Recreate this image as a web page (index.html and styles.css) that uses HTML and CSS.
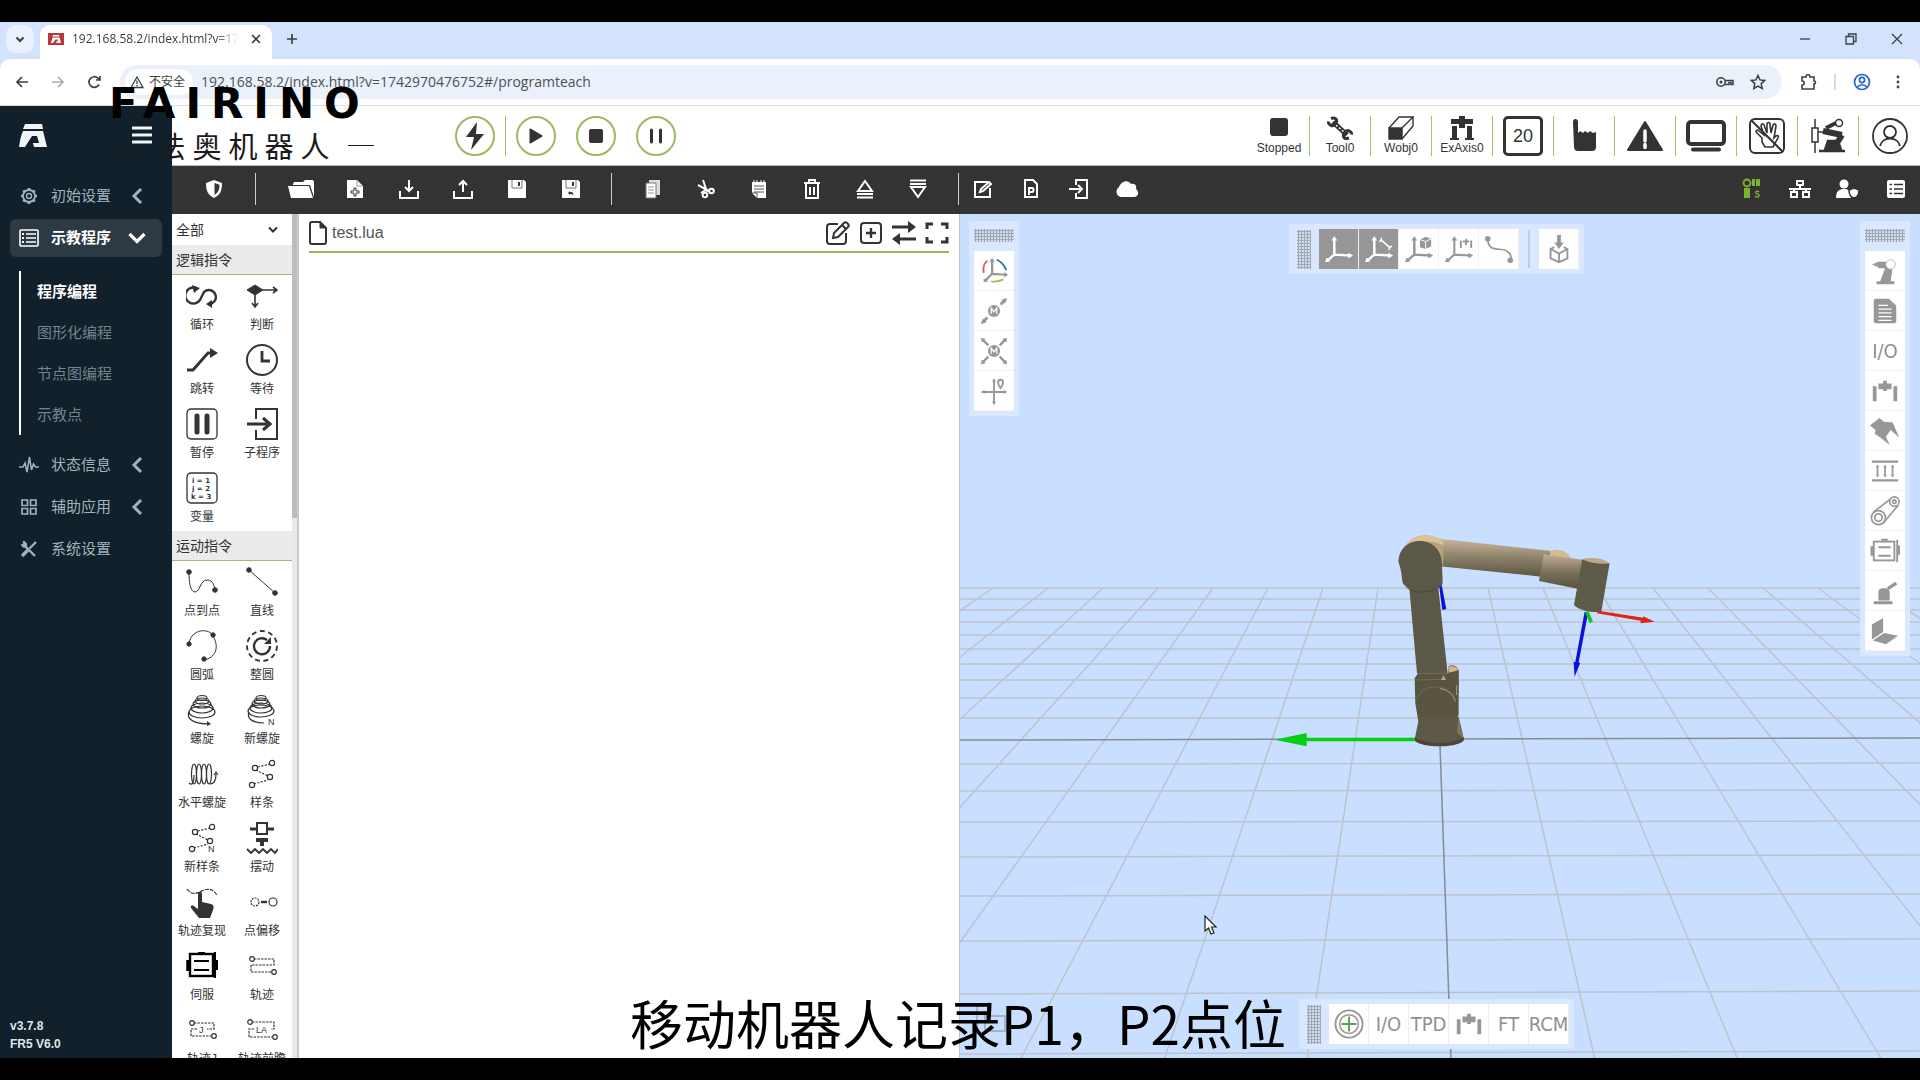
FILE: index.html
```html
<!DOCTYPE html>
<html lang="zh-CN">
<head>
<meta charset="utf-8">
<title>192.168.58.2/index.html</title>
<link rel="stylesheet" href="styles.css">
</head>
<body>
<div class="screen">
  <header class="browser">
    <div class="tabstrip">
      <button class="tab-search" aria-label="搜索标签页"><svg width="12" height="12" viewBox="0 0 12 12" class="ln"><path d="M2.500 4.500L6 8l3.500-3.500" stroke-width="2"/></svg></button>
      <div class="tab">
        <svg class="favicon" width="16" height="12" viewBox="0 0 16 12"><path fill="#b8373a" d="M0 0h16v12H0z"/><path fill="#fff" d="M5 2h6l.5 1.500h-7zM4.500 4.500h7L13 10H8.500l-.5-1.500h2L9.500 6.500H7.500L5 10H3z"/></svg>
        <span class="tab-title">192.168.58.2/index.html?v=17</span>
        <button class="plain" aria-label="关闭标签页"><svg width="12" height="12" viewBox="0 0 12 12" class="ln"><path d="M2 2l8 8M10 2l-8 8" stroke-width="1.700"/></svg></button>
      </div>
      <button class="plain newtab" aria-label="新标签页"><svg width="12" height="12" viewBox="0 0 12 12" class="ln"><path d="M6 1v10M1 6h10" stroke-width="1.700"/></svg></button>
      <div class="window-controls">
        <button class="plain" aria-label="最小化"><svg width="12" height="12" viewBox="0 0 12 12" class="ln"><path d="M1 6h10" stroke-width="1.300"/></svg></button>
        <button class="plain" aria-label="还原"><svg width="12" height="12" viewBox="0 0 12 12" class="ln"><path d="M1 3.500h7.500V11H1zM3.500 3.500V1H11v7.500H8.500" stroke-width="1.300"/></svg></button>
        <button class="plain" aria-label="关闭"><svg width="12" height="12" viewBox="0 0 12 12" class="ln"><path d="M1 1l10 10M11 1L1 11" stroke-width="1.300"/></svg></button>
      </div>
    </div>
    <div class="navbar">
      <button class="plain nav" aria-label="后退"><svg width="14" height="14" viewBox="0 0 14 14" class="ln"><path d="M13 7H2M7 2L2 7l5 5" stroke-width="1.700"/></svg></button>
      <button class="plain nav dim" aria-label="前进"><svg width="14" height="14" viewBox="0 0 14 14" class="ln"><path d="M1 7h11M7 2l5 5-5 5" stroke-width="1.700"/></svg></button>
      <button class="plain nav" aria-label="重新加载"><svg width="14" height="14" viewBox="0 0 14 14" class="ln"><path d="M12 9.500A5.300 5.300 0 1 1 11 3.200L13 5M13 1v4H9" stroke-width="1.700"/></svg></button>
      <form class="omnibox">
        <span class="chip"><svg width="14" height="14" viewBox="0 0 14 14" class="ln"><path d="M7 2l6 10.500H1zM7 5.500V9M7 10v1.300" stroke-width="1.300"/></svg>不安全</span>
        <input class="url" aria-label="地址" value="192.168.58.2/index.html?v=1742970476752#/programteach">
        <svg width="18" height="14" viewBox="0 0 18 14" class="ln"><circle cx="5" cy="7" r="4.200" stroke-width="1.500"/><circle cx="5" cy="7" r="1.500" fill="currentColor" stroke="none"/><path d="M9 5.500h8v4h-2v-2h-2v2H9" stroke-width="1.500"/></svg>
        <svg width="16" height="16" viewBox="0 0 16 16" class="ln"><path d="M8 1.500l2 4.400 4.700.5-3.500 3.200 1 4.800L8 12l-4.200 2.400 1-4.800L1.300 6.400 6 5.900z" stroke-width="1.500"/></svg>
      </form>
      <button class="plain ext" aria-label="扩展程序"><svg width="18" height="18" viewBox="0 0 18 18" class="ln"><path d="M3 4h4c0-3 4-3 4 0h4v4c2 0 2 3 0 3v5H3v-4c3 0 3-4 0-4z" stroke-width="1.600"/></svg></button>
      <span class="nav-sep"></span>
      <button class="plain profile" aria-label="个人资料"><svg width="18" height="18" viewBox="0 0 18 18" class="ln"><circle cx="9" cy="9" r="7.500" stroke-width="1.700"/><circle cx="9" cy="7" r="2.600" stroke-width="1.700"/><path d="M4.500 14c2-3 7-3 9 0" stroke-width="1.700"/></svg></button>
      <button class="plain more" aria-label="菜单"><svg width="4" height="16" viewBox="0 0 4 16" fill="currentColor"><circle cx="2" cy="3" r="1.400"/><circle cx="2" cy="8" r="1.400"/><circle cx="2" cy="13" r="1.400"/></svg></button>
    </div>
  </header>

  <div class="app">
    <nav class="sidebar">
      <div class="brand">
        <svg width="28" height="23" viewBox="0 0 28 23" fill="#f2f5f6"><path d="M6 0h17l1 5H4zM4 7h20l4 16H15l-1-4h6l-2-7h-5L6 23H0c1-7 2-12 4-16z"/></svg>
        <button class="plain burger" aria-label="折叠菜单"><svg width="20" height="18" viewBox="0 0 20 18"><path d="M1 2h18M1 9h18M1 16h18" stroke="#f2f5f6" stroke-width="3" stroke-linecap="round"/></svg></button>
      </div>
      <a class="item" href="#"><svg width="18" height="18" viewBox="0 0 18 18" class="ln"><circle cx="9" cy="9" r="6" stroke-width="1.800"/><circle cx="9" cy="9" r="2.500" stroke-width="1.500"/><path d="M9 1v2M9 15v2M1 9h2M15 9h2M3.300 3.300l1.500 1.500M13.200 13.200l1.500 1.500M14.700 3.300l-1.500 1.500M4.800 13.200l-1.500 1.500" stroke-width="2.600"/></svg><span>初始设置</span><svg class="chev" width="12" height="18" viewBox="0 0 12 18"><path d="M10 2L3 9l7 7" fill="none" stroke="currentColor" stroke-width="3"/></svg></a>
      <a class="item active" href="#"><svg width="20" height="18" viewBox="0 0 20 18" class="ln"><rect x="1" y="1" width="18" height="16" rx="1" stroke-width="1.600"/><path d="M7 5h10M7 9h10M7 13h10" stroke-width="1.400"/><path d="M3 5h2M3 9h2M3 13h2" stroke-width="1.800"/></svg><span>示教程序</span><svg class="chev" width="18" height="12" viewBox="0 0 18 12"><path d="M1.500 2L9 9.500 16.500 2" fill="none" stroke="currentColor" stroke-width="3.200"/></svg></a>
      <div class="sub">
        <a class="current" href="#">程序编程</a>
        <a href="#">图形化编程</a>
        <a href="#">节点图编程</a>
        <a href="#">示教点</a>
      </div>
      <a class="item" href="#"><svg width="20" height="18" viewBox="0 0 20 18" class="ln"><path d="M0 11h4l2-4 2 9L10.500 1l2 13 2-6 2 3H20" stroke-width="1.600"/></svg><span>状态信息</span><svg class="chev" width="12" height="18" viewBox="0 0 12 18"><path d="M10 2L3 9l7 7" fill="none" stroke="currentColor" stroke-width="3"/></svg></a>
      <a class="item" href="#"><svg width="18" height="18" viewBox="0 0 18 18" class="ln"><path d="M2 2h5.500v5.500H2zM10.500 2H16v5.500h-5.500zM2 10.500h5.500V16H2zM10.500 10.500H16V16h-5.500z" stroke-width="1.700"/></svg><span>辅助应用</span><svg class="chev" width="12" height="18" viewBox="0 0 12 18"><path d="M10 2L3 9l7 7" fill="none" stroke="currentColor" stroke-width="3"/></svg></a>
      <a class="item" href="#"><svg width="18" height="18" viewBox="0 0 18 18" class="ln"><path d="M3 4l12 12M16 2L9.500 8.500" stroke-width="2.400"/><path d="M8 10l-6 6" stroke-width="3.400"/><path d="M1.500 4.500c0 3 4 4 5 1.500S5 1 3 1.500L4 4z" fill="currentColor" stroke-width="1"/></svg><span>系统设置</span></a>
      <p class="version">v3.7.8<br>FR5 V6.0</p>
    </nav>

    <div class="main">
      <div class="control-bar">
        <div class="runs">
          <button class="round" aria-label="使能"><svg width="24" height="28" viewBox="0 0 24 28"><path fill="#333" d="M14 0L3 15h8L8 28l13-16h-8z"/></svg></button>
          <span class="rule"></span>
          <button class="round" aria-label="运行"><svg width="14" height="16" viewBox="0 0 14 16"><path fill="#333" d="M1.500 1.500v13l11-6.500z" stroke="#333" stroke-width="2" stroke-linejoin="round"/></svg></button>
          <button class="round" aria-label="停止"><svg width="14" height="14" viewBox="0 0 14 14"><rect width="14" height="14" rx="2" fill="#333"/></svg></button>
          <button class="round" aria-label="暂停"><svg width="14" height="16" viewBox="0 0 14 16"><path d="M2.500 2v12M11.500 2v12" stroke="#333" stroke-width="3" stroke-linecap="round"/></svg></button>
        </div>
        <div class="states">
          <button class="state"><svg width="24" height="24" viewBox="0 0 24 24"><rect x="3" y="2" width="18" height="18" rx="3" fill="#333"/></svg>Stopped</button>
          <button class="state"><svg width="26" height="24" viewBox="0 0 26 24"><path d="M6 6l14 13" stroke="#333" stroke-width="5"/><path d="M9 9l8 7" stroke="#fff" stroke-width="1.500" stroke-dasharray="2 2"/><path d="M4 2.500c5-2 7 2 4.500 5.500S1 9 1.500 5.500M22 22c-5 2-7-2-4.500-5.500S25 15 24.500 18.500" fill="none" stroke="#333" stroke-width="3"/></svg>Tool0</button>
          <button class="state"><svg width="26" height="24" viewBox="0 0 26 24" stroke="#333" stroke-width="1.400"><path d="M1 12h13v11H1z" fill="#333"/><path d="M1 12L11 1h14L14 12M25 1v9L14 23" fill="none"/></svg>Wobj0</button>
          <button class="state"><svg width="26" height="24" viewBox="0 0 26 24"><path d="M2 3h22v5H2zM10 0h6v12h-6zM3 10h5v13H3zM18 10h5v13h-5zM1 22h9v2H1zM16 22h9v2h-9z" fill="#333"/></svg>ExAxis0</button>
          <button class="state"><span class="speed">20</span></button>
          <button class="state"><svg width="24" height="36" viewBox="0 0 24 36"><path d="M3 1c2 0 3 1 3 3v11l2-2 3 2 2-2 3 2 2-2 3 2 3-1v15c0 3-2 4-4 4H6c-2 0-4-1-4-4L1 4c0-2 1-3 2-3z" fill="#333"/></svg></button>
          <button class="state"><svg width="38" height="32" viewBox="0 0 38 32"><path d="M19 2l17 28H2z" fill="#333" stroke="#333" stroke-width="2" stroke-linejoin="round"/><path d="M19 11v10M19 24.500v3" stroke="#fff" stroke-width="3.500" stroke-linecap="round"/></svg></button>
          <button class="state"><svg width="40" height="32" viewBox="0 0 40 32"><rect x="2" y="2" width="36" height="22" rx="3" fill="none" stroke="#333" stroke-width="4"/><path d="M7 29.500h26" stroke="#333" stroke-width="4" stroke-linecap="round"/></svg></button>
          <button class="state"><svg width="36" height="36" viewBox="0 0 36 36" fill="none" stroke="#333"><rect x="1" y="1" width="34" height="34" rx="5" stroke-width="2"/><path d="M13 20L8 15c-2-2 0-4 2-2l5 4-3-9c0-2 2-3 3-1l3 8V6c0-2 3-2 3 0l1 9 2-8c1-2 3-1 3 1l-2 12 2-2c2-1 3 0 2 2l-5 9H16l-3-5z" stroke-width="1.600"/><path d="M2 2l32 32" stroke-width="2"/></svg></button>
          <button class="state"><svg width="36" height="36" viewBox="0 0 36 36" fill="none" stroke="#333"><path d="M9 33h26M15 32l3-9h10l3 9z" fill="#333" stroke-width="2.500"/><path d="M27 25l5-8M32 17L13 13" stroke-width="6"/><path d="M16 10l10-5" stroke-width="4"/><circle cx="29" cy="5" r="3.500" stroke-width="1.500"/><rect x="2" y="10" width="6" height="14" stroke-width="1.500"/><path d="M5 1v9M5 24v11M8 14h7" stroke-width="1.500"/></svg></button>
          <button class="state"><svg width="36" height="36" viewBox="0 0 36 36" fill="none" stroke="#333" stroke-width="1.800"><circle cx="18" cy="18" r="17"/><circle cx="18" cy="14" r="6"/><path d="M8 28c2-10 18-10 20 0"/></svg></button>
        </div>
      </div>

      <div class="toolbar">
        <div class="group g1"><button aria-label="安全"><svg width="20" height="20" viewBox="0 0 20 20"><path d="M10 1l8 3c0 8-2 12-8 15C4 16 2 12 2 4z" fill="#fff"/><path d="M10.500 4l5 1.700c0 5-1.500 8-5 10z" fill="#333"/></svg></button></div>
        <div class="group g2">
          <button aria-label="打开"><svg width="26" height="20" viewBox="0 0 26 20" fill="#fff"><path d="M5 5l1-2h9l2-2h8l1 2v15L22 6H5zM0 7h21l4 12H3z"/></svg></button>
          <button aria-label="新建"><svg width="18" height="20" viewBox="0 0 18 20"><path d="M1 1h10l6 6v12H1z" fill="#fff"/><path d="M11 1v6h6" stroke="#999" fill="none"/><path d="M8 9h2v3h3v2h-3v3H8v-3H5v-2h3z" stroke="#333" fill="none"/></svg></button>
          <button aria-label="导入"><svg width="20" height="20" viewBox="0 0 20 20" class="lw"><path d="M1 12v7h18v-7M10 1v10M6 8l4 4 4-4"/></svg></button>
          <button aria-label="导出"><svg width="20" height="20" viewBox="0 0 20 20" class="lw"><path d="M1 12v7h18v-7M10 13V3M6 6l4-4 4 4"/></svg></button>
          <button aria-label="保存"><svg width="20" height="20" viewBox="0 0 20 20"><path d="M1 1h16l2 2v16H1z" fill="#fff"/><path d="M5 1v8h10V1" fill="none" stroke="#777"/><path d="M12 3v4" stroke="#333" stroke-width="2"/></svg></button>
          <button aria-label="另存为"><svg width="20" height="20" viewBox="0 0 20 20"><path d="M1 1h16l2 2v16H1z" fill="#fff"/><path d="M5 1v8h10V1" fill="none" stroke="#777"/><path d="M12 3v4" stroke="#333" stroke-width="2"/><path d="M12 17c0-2-1-2-3-2v1l-2-2 2-2v1c3 0 4 1 3 4" fill="#333"/></svg></button>
        </div>
        <div class="group g3">
          <button aria-label="复制"><svg width="16" height="20" viewBox="0 0 16 20"><path d="M4 1h11v15H4z" fill="#ddd"/><path d="M1 4h10v15H1z" fill="#fff" stroke="#777"/><path d="M3 8h6M3 11h6M3 14h6" stroke="#999"/></svg></button>
          <button aria-label="剪切"><svg width="20" height="20" viewBox="0 0 20 20" class="lw"><path d="M7 1l4 12M2 6l11 6M11 10l-6 4"/><circle cx="15.500" cy="12" r="2.300"/><circle cx="9" cy="16" r="2.300"/></svg></button>
          <button aria-label="粘贴"><svg width="16" height="20" viewBox="0 0 16 20"><path d="M1 3h14v16H6l-5-5z" fill="#fff"/><path d="M3 1v3M6 1v3M10 1v3M13 1v3" stroke="#fff"/><path d="M3 7h10M3 10h10M3 13h10M1 14h5v5" fill="none" stroke="#555"/></svg></button>
          <button aria-label="删除"><svg width="18" height="20" viewBox="0 0 18 20" class="lw"><path d="M1 4h16M6 3V1h6v2M3 5v14h12V5M7 8v8M11 8v8"/></svg></button>
          <button aria-label="上移"><svg width="18" height="20" viewBox="0 0 18 20" class="lw"><path d="M9 2l7 10H2zM1 15h16M1 18.500h16"/></svg></button>
          <button aria-label="下移"><svg width="18" height="20" viewBox="0 0 18 20" class="lw"><path d="M9 18l7-10H2zM1 5h16M1 1.500h16"/></svg></button>
        </div>
        <div class="group g4">
          <button aria-label="编辑"><svg width="18" height="18" viewBox="0 0 18 18" class="lw"><path d="M16 8v9H1V2h13M6 12l1-3 8-7 2 2-8 7z"/></svg></button>
          <button aria-label="程序"><svg width="16" height="20" viewBox="0 0 16 20" class="lw"><path d="M2 1h8l4 4v13H2zM6 16V9h3c2 0 2 4 0 4H6"/></svg></button>
          <button aria-label="导入文件"><svg width="20" height="20" viewBox="0 0 20 20" class="lw"><path d="M7 6V1h11v18H7v-5M0 10h12M9 6l4 4-4 4"/></svg></button>
          <button aria-label="云"><svg width="24" height="18" viewBox="0 0 24 18" fill="#fff"><path d="M6 17a5.500 5.500 0 0 1-2-10C6 1 13-1 16 4c4-1 6 2 5 5 4 3 2 8-2 8z"/></svg></button>
        </div>
        <div class="group g5">
          <button aria-label="状态"><svg width="20" height="22" viewBox="0 0 20 22"><circle cx="5" cy="5" r="3.500" fill="none" stroke="#7cb42f" stroke-width="1.800"/><path d="M10 1h3v7h-3zM14 1h4v7h-4zM2 10h6v10H2z" fill="#7cb42f"/><path d="M17 14c-1-1-4-1-3 1s4 1 3 3-3 1-4 0" fill="none" stroke="#7cb42f" stroke-width="1.400"/></svg></button>
          <button aria-label="网络"><svg width="22" height="20" viewBox="0 0 22 20" class="lw"><path d="M8 2h6v4H8zM2 13h6v5H2zM14 13h6v5h-6zM11 6v4M0 10h22M5 10v3M17 10v3"/></svg></button>
          <button aria-label="用户"><svg width="24" height="20" viewBox="0 0 24 20"><circle cx="8" cy="5" r="4.500" fill="#fff"/><path d="M0 19c0-7 3-9 8-9s7 2 7 9z" fill="#fff"/><path d="M18 9l5 2c0 4-1 7-5 8-4-1-5-4-5-8z" fill="#fff" stroke="#333" stroke-width="1.500"/></svg></button>
          <button aria-label="列表"><svg width="18" height="18" viewBox="0 0 18 18"><rect width="18" height="18" rx="2" fill="#fff"/><path d="M7 4.500h9M7 9h9M7 13.500h9M2.500 4.500H5M2.500 9H5M2.500 13.500H5" stroke="#333" stroke-width="1.700"/></svg></button>
        </div>
      </div>

      <div class="workspace">
        <section class="palette">
          <div class="palette-body">
            <label class="filter"><select aria-label="指令分类"><option>全部</option></select><svg width="10" height="8" viewBox="0 0 10 8"><path d="M1 1.500l4 4 4-4" fill="none" stroke="#333" stroke-width="2"/></svg></label>
            <h2>逻辑指令</h2>
            <div class="cmds">
              <button><svg viewBox="0 0 32 32" class="ic"><path d="M10 8a8 8 0 1 0 4 12L18 12a7 7 0 1 1 4 12" stroke-width="2.400"/><path d="M6 5l8 3-6 5zM26 28l-6-4 6-4z" fill="#333" stroke="none"/></svg>循环</button>
              <button><svg viewBox="0 0 32 32" class="ic"><path d="M1 10l8-5 8 5-8 5z" fill="#333"/><path d="M17 10h13M27 7l4 3-4 3M9 15v11M6 23l3 4 3-4" stroke-width="1.600"/></svg>判断</button>
              <button><svg viewBox="0 0 32 32" class="ic"><path d="M1 26h6L22 9h4" stroke-width="2.800"/><path d="M24 4l8 5-8 5z" fill="#333" stroke="none"/></svg>跳转</button>
              <button><svg viewBox="0 0 32 32" class="ic"><circle cx="16" cy="16" r="15" stroke-width="2"/><path d="M16 7v10h8" stroke-width="2.800"/></svg>等待</button>
              <button><svg viewBox="0 0 32 32" class="ic"><rect x="1" y="1" width="30" height="30" rx="4" stroke-width="1.300"/><path d="M11 8v16M21 8v16" stroke-width="5" stroke-linecap="round"/></svg>暂停</button>
              <button><svg viewBox="0 0 32 32" class="ic"><path d="M10 11V1h21v30H10V22" stroke-width="2"/><path d="M1 16h20M17 10l7 6-7 6" stroke-width="3"/></svg>子程序</button>
              <button><svg viewBox="0 0 32 32" class="ic"><rect x="1" y="1" width="30" height="30" rx="4" stroke-width="1.300"/><g class="mini"><text x="6" y="11">i = 1</text><text x="6" y="19">j = 2</text><text x="5" y="27">k = 3</text></g></svg>变量</button>
            </div>
            <h2>运动指令</h2>
            <div class="cmds">
              <button><svg viewBox="0 0 32 32" class="ic"><path d="M3 7c0 8 1 19 6 19S14 14 21 14s6 6 9 10" stroke-width="1"/><circle cx="3" cy="6" r="2.300" fill="#333"/><circle cx="29" cy="24" r="2.300" fill="#333"/></svg>点到点</button>
              <button><svg viewBox="0 0 32 32" class="ic"><path d="M3 4l26 23" stroke-width="1"/><circle cx="3" cy="4" r="2.300" fill="#333"/><circle cx="29" cy="27" r="2.300" fill="#333"/></svg>直线</button>
              <button><svg viewBox="0 0 32 32" class="ic"><path d="M3 14C5-2 24-2 27 6c7 12 2 22-9 24" stroke-width="1"/><circle cx="3" cy="14" r="2.200" fill="#333"/><circle cx="27" cy="5" r="2.200" fill="#333"/><circle cx="18" cy="29" r="2.200" fill="#333"/></svg>圆弧</button>
              <button><svg viewBox="0 0 32 32" class="ic"><circle cx="16" cy="16" r="15" stroke-width="1.800" stroke-dasharray="5 3.500"/><path d="M24 16a8 8 0 1 1-3-6" stroke-width="2.400"/><path d="M25 7v7h-7z" fill="#333" stroke="none"/></svg>整圆</button>
              <button><svg viewBox="0 0 32 32" class="ic"><g stroke-width="1.200"><ellipse cx="16" cy="4" rx="5" ry="2.500"/><ellipse cx="16" cy="7" rx="7" ry="3"/><ellipse cx="16" cy="10" rx="9" ry="4"/><ellipse cx="16" cy="14" rx="11" ry="5"/><ellipse cx="16" cy="18" rx="13" ry="6"/><path d="M3 18c-3 7 5 12 20 12"/></g><path d="M21 27l4 3-4 2z" fill="#333" stroke="none"/></svg>螺旋</button>
              <button><svg viewBox="0 0 32 32" class="ic"><g stroke-width="1.200"><ellipse cx="15" cy="4" rx="5" ry="2.500"/><ellipse cx="15" cy="7" rx="7" ry="3"/><ellipse cx="15" cy="10" rx="9" ry="4"/><ellipse cx="15" cy="14" rx="11" ry="5"/><ellipse cx="15" cy="17" rx="13" ry="6"/><path d="M3 18c-3 7 5 11 15 11"/></g><text class="tag" x="22" y="31">N</text></svg>新螺旋</button>
              <button><svg viewBox="0 0 32 32" class="ic"><g stroke-width="1.200"><path d="M3 25c3 3 5 0 5-8"/><ellipse cx="8" cy="16" rx="2.500" ry="10"/><ellipse cx="13" cy="16" rx="2.500" ry="10"/><ellipse cx="18" cy="16" rx="2.500" ry="10"/><ellipse cx="23" cy="16" rx="2.500" ry="10"/><path d="M24 26c5 0 6-5 6-10M28 17l2-3 2 3"/></g></svg>水平螺旋</button>
              <button><svg viewBox="0 0 32 32" class="ic"><g stroke-width="1.200"><path d="M8 26l14-4M10 12l12 6M12 9l12-3" stroke-dasharray="2 1.500"/><circle cx="6" cy="27" r="2.600"/><circle cx="24" cy="19" r="2.600"/><circle cx="9" cy="10" r="2.600"/><circle cx="26" cy="5" r="2.600"/></g></svg>样条</button>
              <button><svg viewBox="0 0 32 32" class="ic"><g stroke-width="1.200"><path d="M8 26l14-4M10 12l12 6M12 9l12-3" stroke-dasharray="2 1.500"/><circle cx="6" cy="27" r="2.600"/><circle cx="24" cy="19" r="2.600"/><circle cx="9" cy="10" r="2.600"/><circle cx="26" cy="5" r="2.600"/></g><text class="tag" x="22" y="30">N</text></svg>新样条</button>
              <button><svg viewBox="0 0 32 32" class="ic"><rect x="11" y="1" width="10" height="11" stroke-width="2"/><path d="M4 7h7M21 7h7" stroke-width="3"/><path d="M10 18h12M16 18v6" stroke-width="4"/><path d="M1 27l4 4 4-4 4 4 4-4 4 4 4-4 4 4 3-4" stroke-width="1.800"/></svg>摆动</button>
              <button><svg viewBox="0 0 32 32" class="ic"><path d="M1 3c6 8 12 3 17 1s11 0 13 6" stroke-width="1.200" stroke-dasharray="4 1"/><path d="M12 8c0-3 4-3 4 0v8l9 2c3 1 3 3 2 6l-3 8H13L5 22c-1-3 2-3 4-1l3 2z" fill="#333" stroke="none"/></svg>轨迹复现</button>
              <button><svg viewBox="0 0 32 32" class="ic"><g stroke-width="1.200"><circle cx="9" cy="16" r="4" stroke-dasharray="2 1"/><circle cx="27" cy="16" r="4"/></g><path d="M15 16h6" stroke-width="2.400"/></svg>点偏移</button>
              <button><svg viewBox="0 0 32 32" class="ic dark"><rect x="4" y="4" width="23" height="22" stroke-width="2.400"/><path d="M8 11h15M8 20h15M12 3h7M29 2v26" stroke-width="2"/><path d="M2 10v11M31 10v10" stroke-width="3.500"/></svg>伺服</button>
              <button><svg viewBox="0 0 32 32" class="ic"><g stroke-width="1.200"><path d="M8 9h20v6H5v7h20" stroke-dasharray="2.500 1"/><circle cx="6" cy="9" r="2.300"/><circle cx="28" cy="22" r="2.300"/></g></svg>轨迹</button>
              <button><svg viewBox="0 0 32 32" class="ic"><g stroke-width="1.200"><path d="M8 9h20v6h-7M11 15H5v7h20" stroke-dasharray="2.500 1"/><circle cx="6" cy="9" r="2.300"/><circle cx="28" cy="22" r="2.300"/></g><text class="tag" x="13" y="19">J</text></svg>轨迹J</button>
              <button><svg viewBox="0 0 32 32" class="ic"><g stroke-width="1.200"><path d="M6 8h22v7h-3M8 15H3v8h23" stroke-dasharray="2.500 1"/><circle cx="4" cy="8" r="2.300"/><circle cx="29" cy="23" r="2.300"/></g><text class="tag" x="10" y="19">LA</text></svg>轨迹前瞻</button>
            </div>
          </div>
          <div class="scroll"><div class="thumb"></div></div>
        </section>

        <section class="editor">
          <div class="file-bar">
            <svg width="18" height="24" viewBox="0 0 18 24" class="ln"><path d="M3 1h8l6 6v14c0 1-1 2-2 2H3c-1 0-2-1-2-2V3c0-1 1-2 2-2z" stroke-width="2"/><path d="M11 1v6h6z" fill="#333"/></svg>
            <span class="file-name">test.lua</span>
            <button class="plain" aria-label="编辑"><svg width="24" height="24" viewBox="0 0 24 24" class="ln"><path d="M12 3H4C2 3 1 4 1 6v14c0 2 1 3 3 3h13c2 0 3-1 3-3v-8M7 17l1-5L18 2c1-1 2-1 3 0l1 1c1 1 1 2 0 3L12 16zM16 4l4 4" stroke-width="2"/></svg></button>
            <button class="plain" aria-label="添加"><svg width="24" height="24" viewBox="0 0 24 24" class="ln"><rect x="2" y="2" width="20" height="20" rx="3" stroke-width="2"/><path d="M12 7v10M7 12h10" stroke-width="2.400"/></svg></button>
            <button class="plain" aria-label="切换"><svg width="24" height="24" viewBox="0 0 24 24" class="ln"><path d="M0 6h18M24 18H6" stroke-width="3"/><path d="M16 0l8 6-8 6zM8 12l-8 6 8 6z" fill="#333" stroke="none"/></svg></button>
            <button class="plain" aria-label="全屏"><svg width="24" height="24" viewBox="0 0 24 24" class="ln"><path d="M2 8V3h6M16 3h6v5M22 16v5h-6M8 21H2v-5" stroke-width="3"/></svg></button>
          </div>
        </section>

        <section class="scene">
          <svg class="world" viewBox="0 -1 960 845" preserveAspectRatio="xMidYMin slice">
            <path class="grid" d="M0 373H960M0 384H960M0 395H960M0 407H960M0 420H960M0 434H960M0 449H960M0 465H960M0 483H960M0 503H960M0 549L960 548M0 576L960 575M0 607L960 606M0 642L960 640M0 681L960 679M0 726L960 724M0 779L960 776M0 839L960 836
            M33 373L-659 845M88 373L-515 845M143 373L-371 845M198 373L-228 845M253 373L-84 845M308 373L60 845M363 373L204 845M418 373L347 845M528 373L635 845M583 373L778 845M638 373L922 845M693 373L1066 845M748 373L1210 845M803 373L1353 845M858 373L1497 845M913 373L1641 845"/>
            <path class="axis" d="M0 525L960 523M480 530L491 845"/>
            <defs>
              <linearGradient id="arm" x1=".05" y1="0" x2="0" y2="1"><stop offset="0" stop-color="#cdb79a"/><stop offset=".4" stop-color="#958871"/><stop offset="1" stop-color="#58523f"/></linearGradient>
              <linearGradient id="fore" x1="0" y1="0" x2="0" y2="1"><stop offset="0" stop-color="#c2ad92"/><stop offset=".5" stop-color="#7d725c"/><stop offset="1" stop-color="#58533f"/></linearGradient>
            </defs>
            <g transform="translate(280 285) scale(.3333)">
              <path d="M597 255l8 0 14 72-12 3z" fill="#0b12d8"/>
              <path d="M625 500c8-8 25-5 31 10v70h-30z" fill="#6f6752"/>
              <path d="M625 503c8-8 25-4 30 8-10 8-22 8-27 4z" fill="#d2b78d"/>
              <path d="M585 115l350 38-30 77-315-32z" fill="url(#arm)"/>
              <path d="M930 155c20-12 50-5 62 18l-50 5z" fill="#d6bb8f"/>
              <path d="M490 150c15-40 60-55 100-37 18 6 24 30 18 85l-20-20z" fill="#b7a27f"/>
              <path d="M490 150c15-40 60-55 100-37 14 5 20 12 20 22-40-15-80-20-120 15z" fill="#dcc196"/>
              <path d="M475 185c2-40 30-62 65-62 38 0 66 28 66 70l2 55c-1 8-5 12-13 16l28 256h-92l-23-255c-8-3-15-8-20-16-4-30-4-40-13-64z" fill="#5b5847"/>
              <path d="M524 535l10-15 90 0 32-10v135l-20 30-100-5-10-60z" fill="#58543f"/>
              <path d="M525 540l95-2M530 600c10-50 100-55 115 0" fill="none" stroke="#716a56" stroke-width="3"/>
              <path d="M600 566c25 5 38 15 46 38M650 555v30" fill="none" stroke="#a79b83" stroke-width="3"/>
              <path d="M610 525l8 15-14 0z" fill="#b5a68c"/>
              <path d="M538 650h118l16 68c-20 26-125 26-148 0z" fill="#5d5946"/>
              <path d="M655 655l16 62-20-20z" fill="#7e745e"/>
              <path d="M524 712c25 22 120 22 147 0v10c-20 22-125 22-147 0z" fill="#4b4738"/>
              <path d="M500 262c25 22 75 18 100-4" fill="none" stroke="#4a4637" stroke-width="3"/>
              <path d="M912 163l120 17-15 87-120-24z" fill="url(#fore)"/>
              <path d="M1027 178l82 12-25 145c-30 5-70-5-82-20l10-55z" fill="#5f5b49"/>
              <path d="M1027 178c20-8 65-5 82 12-20 4-60 0-82-12z" fill="#bda98a"/>
              <path d="M1075 332l135 21v-4l34 16-42 5v-8l-132-22z" fill="#e02418"/>
              <path d="M1034 335l10 5-28 148h5l-17 42-3-44h5z" fill="#0a10dd"/>
              <path d="M1036 338l9-6 14 32-10 6z" fill="#08c91c"/>
              <path d="M103 719l97-20v14h325v11H200v15z" fill="#04cf14"/>
            </g>
          </svg>

          <div class="dock dock-left">
            <span class="dots wide"></span>
            <div class="stack">
              <button aria-label="旋转"><svg viewBox="0 0 32 32" class="gr"><path d="M14 19V4M14 19l15 1M14 19l-7 7" stroke-width="2.400"/><path d="M11 6l3-4 3 4zM27 17l4 3-4 3zM5 24v4l5-1z" fill="#979797" stroke="none"/><path d="M5 18c-1-5 0-10 4-13" stroke="#df5f52" stroke-width="2"/><path d="M19 4c5 2 8 6 10 11" stroke="#2d6d9c" stroke-width="2"/><path d="M13 27c5 1 9 0 13-2" stroke="#9cc44c" stroke-width="2"/></svg></button>
              <button aria-label="单点"><svg viewBox="0 0 32 32" class="gr"><circle cx="16" cy="16" r="6.500" fill="#979797" stroke="none"/><path d="M5 27l4-4M23 9l4-4" stroke-width="3"/><path d="M2 30l2-6 4 4zM30 2l-2 6-4-4z" fill="#979797" stroke="none"/><path d="M13 19v-6l3 4 3-4v6" stroke="#fff" stroke-width="1.300"/></svg></button>
              <button aria-label="多点"><svg viewBox="0 0 32 32" class="gr"><circle cx="16" cy="16" r="6.500" fill="#979797" stroke="none"/><path d="M4 28l6-6M22 10l6-6M4 4l6 6M22 22l6 6" stroke-width="2.600"/><path d="M2 30l1-5 4 4zM30 2l-1 5-4-4zM2 2l5 1-4 4zM30 30l-5-1 4-4z" fill="#979797" stroke="none"/><path d="M13 19v-6l3 4 3-4v6" stroke="#fff" stroke-width="1.300"/></svg></button>
              <button aria-label="定位"><svg viewBox="0 0 32 32" class="gr"><path d="M3 17h26M16 4v26" stroke-width="2"/><path d="M2 17l4-2v4zM30 17l-4-2v4zM16 31l-2-4h4zM16 2l-2 4h4z" fill="#979797" stroke="none"/><path d="M23 13c-4-5-3-9 0-9s4 4 0 9z" stroke-width="2"/></svg></button>
            </div>
          </div>

          <div class="dock dock-right">
            <span class="dots wide"></span>
            <div class="stack">
              <button aria-label="机器人"><svg viewBox="0 0 32 32" class="gf"><path d="M2 9l7-3v6zM9 6h10v7H9zM16 13h8l-2 14h4v3H7v-3h4z"/><circle cx="22" cy="9" r="5" fill="#fff" stroke="#bbb"/></svg></button>
              <button aria-label="日志"><svg viewBox="0 0 32 32" class="gf"><path d="M4 5c0-1 1-2 2-2h14l8 7v17c0 1-1 2-2 2H6c-1 0-2-1-2-2z"/><path d="M9 10h10M9 14h14M9 18h14M9 22h14M9 26h14" stroke="#fff" stroke-width="1.500"/></svg></button>
              <button class="txt">I/O</button>
              <button aria-label="外部轴"><svg viewBox="0 0 32 32" class="gf"><path d="M3 11h4v16H3zM25 11h4v16h-4zM9 8h14v6H9zM14 5h4v11h-4z"/></svg></button>
              <button aria-label="夹爪"><svg viewBox="0 0 32 32" class="gf"><path d="M10 2l5 4 9 1 2 4 5 12-9-8-5 7 4 9-10-8-6-4 1-4-6-5z"/></svg></button>
              <button aria-label="负载"><svg viewBox="0 0 32 32" class="gr"><path d="M2 6h28M2 26h28" stroke-width="2.600"/><path d="M8 11v10M16 11v10M24 11v10" stroke-width="1.800"/><path d="M6 12l2-3 2 3zM14 12l2-3 2 3zM22 12l2-3 2 3zM6 20l2 3 2-3zM14 20l2 3 2-3zM22 20l2 3 2-3z" fill="#979797" stroke="none"/></svg></button>
              <button aria-label="传送带"><svg viewBox="0 0 32 32" class="gr" stroke-width="1.800"><circle cx="9" cy="23" r="7.500"/><circle cx="9" cy="23" r="4"/><circle cx="26" cy="6" r="5"/><circle cx="26" cy="6" r="1.800"/><path d="M4 17L22 3M14 29L30 10"/></svg></button>
              <button aria-label="电机"><svg viewBox="0 0 32 32" class="gr"><rect x="4" y="6" width="22" height="20" stroke-width="2"/><path d="M9 12h13M9 21h13M12 4h7M29 4v24" stroke-width="2"/><path d="M2 11v10M31 10v10" stroke-width="3"/></svg></button>
              <button aria-label="打磨"><svg viewBox="0 0 32 32" class="gf"><path d="M9 26v-9c0-3 2-4 5-4h3c2 0 3 1 4 4v9zM4 27h20v3H4zM18 12l9-6 2 3-9 6z"/></svg></button>
              <button aria-label="坐标面"><svg viewBox="0 0 32 32" class="gf"><path d="M2 9l12-7v15L2 25zM3 26l12-8 15 3-13 9z"/></svg></button>
            </div>
          </div>

          <div class="dock-row top">
            <div class="dock">
              <span class="dots tall"></span>
              <div class="stack row">
                <button class="on" aria-label="基坐标系"><svg viewBox="0 0 32 32" class="gw"><path d="M11 22V5M11 22l17 1M11 22l-8 7" stroke-width="2.600"/><path d="M8 7l3-5 3 5zM26 20l5 3-5 3zM1 30l2-5 4 4z" fill="#fff" stroke="none"/></svg></button>
                <button class="on" aria-label="工具坐标系"><svg viewBox="0 0 32 32" class="gw"><path d="M11 22V5M11 22l17 1M11 22l-8 7" stroke-width="2.600"/><path d="M8 7l3-5 3 5zM26 20l5 3-5 3zM1 30l2-5 4 4z" fill="#fff" stroke="none"/><path d="M19 7l8 7M18 4l1 3-3 1M30 13l-3 1v3" stroke-width="1.700"/></svg></button>
                <button aria-label="工件坐标系"><svg viewBox="0 0 32 32" class="gr"><path d="M11 22V5M11 22l17 1M11 22l-8 7" stroke-width="2.600"/><path d="M8 7l3-5 3 5zM26 20l5 3-5 3zM1 30l2-5 4 4z" fill="#979797" stroke="none"/><path d="M17 6l6-3 6 2v8l-6 3-6-2z" fill="#979797" stroke="none"/><path d="M17 6l6 2 6-3M23 8v8" stroke="#fff" stroke-width="1"/></svg></button>
                <button aria-label="外部轴坐标系"><svg viewBox="0 0 32 32" class="gr"><path d="M11 22V5M11 22l17 1M11 22l-8 7" stroke-width="2.200"/><path d="M8 7l3-5 3 5zM26 20l5 3-5 3zM1 30l2-5 4 4z" fill="#979797" stroke="none"/><path d="M18 7v8M29 7v8M20 8h7M23.500 5v7" stroke-width="2"/></svg></button>
                <button aria-label="轨迹"><svg viewBox="0 0 32 32" class="gr"><path d="M4 5c0 20 23 3 25 21" stroke-width="1.800"/><circle cx="4" cy="5" r="3" fill="#979797" stroke="none"/><circle cx="28" cy="28" r="3" fill="#979797" stroke="none"/></svg></button>
              </div>
              <span class="dock-sep"></span>
              <div class="stack row"><button aria-label="导入模型"><svg viewBox="0 0 32 32" class="gr"><path d="M16 1v10" stroke-width="4"/><path d="M11 9l5 7 5-7z" fill="#979797" stroke="none"/><path d="M11 14l-4 2v10l9 4 9-4V16l-4-2M7 16l9 5 9-5M16 21v9" stroke-width="2"/></svg></button></div>
            </div>
          </div>

          <div class="dock-row bottom">
            <div class="dock">
              <span class="dots tall"></span>
              <div class="stack row">
                <button aria-label="点动"><svg viewBox="0 0 32 32" class="gr"><circle cx="16" cy="16" r="14.500" stroke-width="2"/><circle cx="16" cy="16" r="10" stroke-width="1.600"/><path d="M16 8v16M8 16h16" stroke="#55a255" stroke-width="2"/></svg></button>
                <button class="txt">I/O</button>
                <button class="txt">TPD</button>
                <button aria-label="外部轴"><svg viewBox="0 0 32 32" class="gf"><path d="M3 11h4v16H3zM25 11h4v16h-4zM9 8h14v6H9zM14 5h4v11h-4z"/></svg></button>
                <button class="txt">FT</button>
                <button class="txt">RCM</button>
              </div>
            </div>
          </div>
          <svg class="display-icon" width="30" height="32" viewBox="0 0 30 32"><path d="M1 2h7M1 2v28h7M9 12h20v15H9z" fill="none" stroke="#a7b2c4" stroke-width="2"/></svg>
          <svg class="cursor" width="14" height="20" viewBox="0 0 14 20"><path d="M1 1v15l3.500-3 2.500 6 3-1-2.500-6H12z" fill="#fff" stroke="#222" stroke-width="1.200"/></svg>
        </section>
      </div>
    </div>
  </div>

  <div class="watermark">
    <strong>FAIRINO</strong>
    <div class="wm-line"><i></i><span>法奥机器人</span><i></i></div>
  </div>
  <p class="caption">移动机器人记录P1，P2点位</p>
</div>
</body>
</html>
```
FILE: styles.css
```css
* { box-sizing: border-box; }
body { margin: 0; background: #000; color: #333; font: 12px/18px "Liberation Sans", "Noto Sans CJK SC", sans-serif; }
button, input, select { font: inherit; color: inherit; }
button { border: 0; padding: 0; background: none; display: flex; align-items: center; justify-content: center; }
a { color: inherit; text-decoration: none; }
svg { flex: none; display: block; }
.ln { fill: none; stroke: currentColor; }
.lw { fill: none; stroke: #fff; stroke-width: 2; }
.screen { position: relative; height: 100vh; padding: 22px 0; display: flex; flex-direction: column; overflow: hidden; }

/* browser window */
.browser { flex: none; background: #d3e2fd; color: #3c4043; }
.tabstrip { display: flex; height: 37px; padding-left: 6px; align-items: center; }
.tab-search { width: 28px; height: 28px; border-radius: 10px; background: #e9f1fe; margin-top: -4px; }
.tab { align-self: flex-end; display: flex; align-items: center; gap: 8px; width: 232px; height: 34px; margin-left: 6px; padding: 0 10px 6px 8px; border-radius: 10px 10px 0 0; background: #fff; }
.tab-title { flex: 1; overflow: hidden; white-space: nowrap; font-family: "Open Sans", sans-serif; -webkit-mask-image: linear-gradient(90deg, #000 85%, transparent 98%); mask-image: linear-gradient(90deg, #000 85%, transparent 98%); }
.newtab { margin: -4px 0 0 14px; }
.window-controls { display: flex; gap: 34px; margin: -4px 17px 0 auto; }
.navbar { display: flex; align-items: center; height: 47px; padding: 0 20px 0 4px; background: #fff; border-bottom: 1px solid #ddd; border-radius: 10px 10px 0 0; }
.nav { width: 36px; }
.dim { color: #aaa; }
.omnibox { flex: 1; display: flex; align-items: center; gap: 16px; height: 34px; margin: 0 17px 0 8px; padding: 0 16px 0 5px; border-radius: 17px; background: #eaf1fa; }
.chip { display: flex; align-items: center; gap: 5px; height: 26px; padding: 0 8px 0 5px; border-radius: 13px; background: #fff; white-space: nowrap; }
.url { flex: 1; min-width: 0; margin-left: -8px; padding: 0; border: 0; outline: 0; background: none; font: 14px/20px "Open Sans", sans-serif; color: #4c5156; }
.nav-sep { width: 2px; height: 16px; margin: 0 17px; background: #c9ddf8; }
.profile { color: #2767c9; }
.more { margin-left: 25px; }

/* shell */
.app { flex: 1; min-height: 0; display: flex; background: #fff; }
.sidebar { flex: none; width: 172px; display: flex; flex-direction: column; padding: 0 10px; background: #11202a; color: #9fb3bd; font-size: 15px; }
.brand { display: flex; align-items: center; justify-content: space-between; height: 58px; margin-bottom: 13px; padding: 0 10px 0 9px; }
.item { display: flex; align-items: center; flex: none; height: 38px; margin-bottom: 4px; padding: 0 16px 0 9px; border-radius: 6px; }
.item > svg:first-child { width: 20px; }
.item span { margin-left: 12px; }
.chev { width: 18px; margin-left: auto; }
.active { background: #2d3a43; color: #fff; font-weight: bold; margin-bottom: 0; }
.sub { display: flex; flex-direction: column; margin: 14px 0 11px 9px; border-left: 2px solid #fff; padding-left: 16px; color: #71858f; }
.sub a { line-height: 41px; }
.sub .current { color: #fff; font-weight: bold; }
.version { margin: auto 0 5px; color: #dfe6ea; font-size: 12px; font-weight: bold; }
.main { flex: 1; min-width: 0; display: flex; flex-direction: column; }

/* run controls and robot state */
.control-bar { flex: none; display: flex; justify-content: space-between; align-items: center; height: 60px; padding-left: 283px; border-bottom: 1px solid #bbb; }
.runs { display: flex; gap: 20px; }
.round { width: 40px; height: 40px; border: 2px solid #9cba5c; border-radius: 50%; }
.rule { width: 1px; margin: 0 -10px; background: #9cba5c; }
.states { display: flex; }
.state { flex-direction: column; gap: 1px; width: 61px; height: 40px; border-right: 1px solid #a9c26c; line-height: 14px; }
.state:last-child { border-right: 0; }
.speed { width: 40px; height: 40px; border: 3px solid #333; border-radius: 5px; font-size: 18px; line-height: 34px; }

/* dark tool bar */
.toolbar { flex: none; display: flex; height: 48px; padding-bottom: 2px; background: #333; align-items: center; }
.group { display: flex; height: 32px; border-right: 1px solid #ccc; }
.group button { width: 53px; }
.g1 { padding: 0 15px; }
.g2 { padding: 0 13px 0 18px; }
.g2 button { width: 54px; }
.g3 { padding: 0 14px; }
.g4, .g5 { border: 0; }
.group.g4 button, .group.g5 button { width: 48px; }
.g5 { margin-left: auto; }

.workspace { flex: 1; min-height: 0; display: flex; }

/* command palette */
.palette { flex: none; display: flex; width: 127px; overflow: hidden; }
.palette-body { width: 120px; height: 100%; overflow: hidden; }
.filter { display: flex; align-items: center; height: 31px; padding: 0 14px 0 4px; }
.filter select { flex: 1; appearance: none; border: 0; padding: 0; background: none; outline: 0; font-size: 14px; }
.palette h2 { margin: 0; height: 30px; padding-left: 4px; background: #ebebeb; border-bottom: 1px solid #a3bd66; font-size: 14px; font-weight: normal; line-height: 30px; }
.cmds { display: grid; grid-template-columns: 60px 60px; }
.cmds button { flex-direction: column; justify-content: flex-start; gap: 4px; height: 64px; padding-top: 5px; white-space: nowrap; }
.ic { width: 32px; height: 32px; fill: none; stroke: #333; }
.dark { stroke: #000; }
.mini, .tag { fill: #333; stroke: none; }
.mini { font: bold 7px "DejaVu Sans", sans-serif; }
.tag { font-size: 9px; }
.scroll { width: 7px; background: #e9e9e9; border-right: 2px solid #c9c9c9; }
.thumb { height: 36%; background: #bdbdbd; }

/* program editor */
.editor { flex: 1; padding: 0 10px; background: #fff; }
.file-bar { display: flex; align-items: center; gap: 9px; height: 39px; border-bottom: 2px solid #9cba5c; }
.file-name { flex: 1; margin-left: -4px; font-size: 16px; color: #555; }

/* 3d view */
.scene { position: relative; flex: 0 0 calc(50vw + 1px); overflow: hidden; background: #c9dfff; border-left: 1px solid #b9c2cf; }
.world { width: 100%; height: 100%; }
.grid { fill: none; stroke: #bcc3cc; stroke-width: 1.500; }
.axis { fill: none; stroke: #858c95; stroke-width: 1.500; }
.dock { display: flex; align-items: center; padding: 5px; background: #d9e8ff; }
.dock-left, .dock-right { position: absolute; top: 7px; flex-direction: column; gap: 9px; padding-top: 8px; }
.dock-left { left: 9px; }
.dock-right { right: 10px; }
.dock-row { position: absolute; left: 0; right: 7px; display: flex; justify-content: center; pointer-events: none; }
.dock-row .dock { gap: 8px; padding-left: 8px; }
.top { top: 10px; }
.bottom { bottom: 9px; }
.dots { background: radial-gradient(circle, #a0a8b4 1px, transparent 1.500px) 0 0 / 3px 3px; }
.wide { width: 40px; height: 13px; }
.tall { width: 14px; height: 39px; }
.stack { display: flex; flex-direction: column; background: #fff; }
.row { flex-direction: row; }
.stack button { width: 40px; height: 40px; border-bottom: 1px solid #f0f0f0; color: #8f8f8f; }
.row button { border-bottom: 0; border-right: 1px solid #f0f0f0; }
.stack svg { width: 30px; height: 30px; }
.stack .on { background: #979797; }
.stack .txt { font: 20px/24px "DejaVu Sans Condensed", "Liberation Sans", sans-serif; }
.gr { fill: none; stroke: #979797; }
.gw { fill: none; stroke: #fff; }
.gf { fill: #979797; }
.dock-sep { width: 2px; height: 38px; margin: 0 1px; background: #c0ccdd; }
.display-icon { position: absolute; left: 16px; bottom: 22px; }
.cursor { position: absolute; left: 244px; top: 701px; }

/* video overlays */
.watermark { position: absolute; left: 109px; top: 84px; width: 265px; color: #000; pointer-events: none; }
.watermark strong { display: block; font: bold 42px/40px "DejaVu Sans", sans-serif; letter-spacing: 10px; white-space: nowrap; }
.wm-line { display: flex; align-items: center; justify-content: space-between; height: 42px; padding-left: 3px; }
.wm-line i { width: 26px; height: 1px; background: #1c1a1a; }
.wm-line span { color: #1c1a1a; font: 29px/42px "Noto Sans CJK SC", sans-serif; letter-spacing: 7px; margin-right: -7px; white-space: nowrap; }
.caption { position: absolute; left: 630px; bottom: 22px; margin: 0; color: #000; font: 53px/72px "Noto Sans CJK SC", sans-serif; white-space: nowrap; pointer-events: none; }
```
